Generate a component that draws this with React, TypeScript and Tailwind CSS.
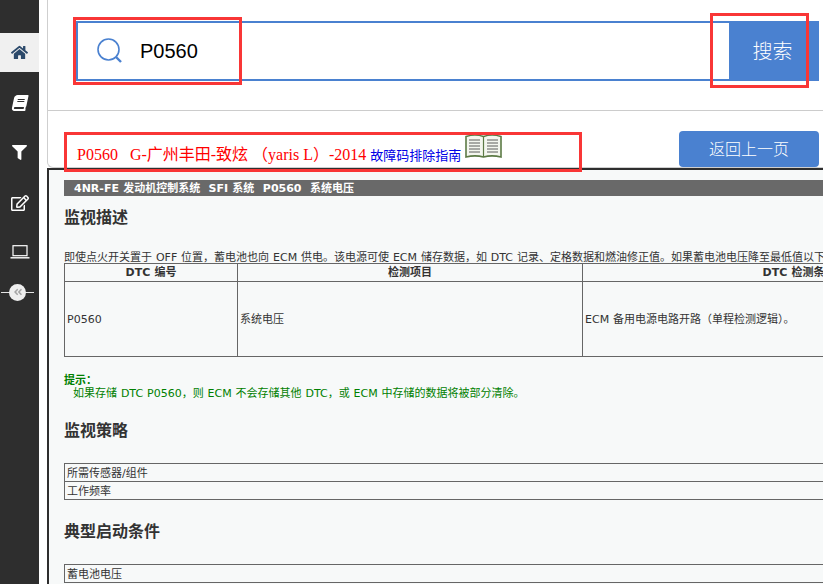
import { FaHome, FaBook, FaFilter, FaRegEdit, FaAngleDoubleLeft } from "react-icons/fa";

const cjk = "font-['DejaVu_Sans','Noto_Sans_CJK_SC',sans-serif]";

function Overlay({ className }: { className: string }) {
  return <div className={`absolute border-[3px] border-[#f93636] pointer-events-none ${className}`} />;
}

function NavItem({ children, active }: { children: React.ReactNode; active?: boolean }) {
  return (
    <div className={`h-[39px] flex items-center justify-center mb-[11px] ${active ? "bg-[#f0f0f0]" : ""}`}>
      {children}
    </div>
  );
}

export default function App() {
  return (
    <div className={`relative w-[823px] h-[584px] overflow-hidden bg-white flex ${cjk}`}>
      <aside className="w-[39px] shrink-0 bg-[#2e2e2e] pt-[33px]">
        <NavItem active>
          <FaHome size={17} color="#2c4a6b" />
        </NavItem>
        <NavItem>
          <FaBook size={16} color="#ffffff" className="-skew-x-12" />
        </NavItem>
        <NavItem>
          <FaFilter size={15} color="#ffffff" />
        </NavItem>
        <NavItem>
          <FaRegEdit size={18} color="#ffffff" />
        </NavItem>
        <NavItem>
          <svg className="-mt-[2px]" width="20" height="14" viewBox="0 0 20 14" fill="none">
            <rect x="3" y="0.700" width="14" height="10" stroke="white" strokeWidth="1.200" />
            <path d="M0.500 12.800h19" stroke="white" strokeWidth="1.400" />
          </svg>
        </NavItem>
        <div className="relative h-[16px] mt-[12px] flex items-center pl-[9px]">
          <div className="absolute left-[1px] w-[33px] h-px bg-[#e5e5e5]" />
          <div className="relative w-[17px] h-[17px] rounded-full bg-[#eeeeee] flex items-center justify-center">
            <FaAngleDoubleLeft size={10} color="#a5a5a5" />
          </div>
        </div>
      </aside>

      <main className="flex-1 min-w-0 pl-[8px] flex flex-col">
        <section className="h-[168px] shrink-0 border-l border-b border-[#cfcfcf] rounded-bl-[6px] flex flex-col">
          <div className="h-[111px] shrink-0 border-b border-[#cccccc] pt-[21px] pl-[28px] pr-[4px]">
            <div className="h-[60px] border-2 border-[#4a81d0] flex items-center">
              <svg className="ml-[19px]" width="26" height="26" viewBox="0 0 26 26" fill="none">
                <circle cx="11.500" cy="11.500" r="10.500" stroke="#4a81d0" strokeWidth="1.600" />
                <path d="M19 19l5 5" stroke="#4a81d0" strokeWidth="2.400" />
              </svg>
              <span className="ml-[17px] flex-1 text-[20px] text-black font-['Liberation_Sans',sans-serif]">P0560</span>
              <button className="w-[90px] self-stretch -my-[2px] -mr-[2px] bg-[#4a81d0] text-white text-[20px] font-['Noto_Sans_CJK_SC',sans-serif] font-light pr-[3px]">
                搜索
              </button>
            </div>
          </div>
          <div className="flex-1 flex items-start justify-between pl-[29px] pr-[4px]">
            <div className="mt-[23px] flex items-end font-['Liberation_Serif','Noto_Sans_CJK_SC',serif] whitespace-nowrap">
              <span className="text-[16px] leading-[20px] text-[#f00] whitespace-pre">P0560   G-广州丰田-致炫 （yaris L）-2014 </span>
              <span className="text-[13px] leading-[20px] text-[#0000e6] font-['Noto_Sans_CJK_SC',sans-serif]">故障码排除指南</span>
              <svg className="ml-[4px] mb-[6px]" width="37" height="25" viewBox="0 0 37 25" fill="none">
                <path d="M1 2.500c6-2 12-2 17.500 0c5.500-2 11.500-2 17.500 0V23c-6-1.500-12-1.500-17.500 0c-5.500-1.500-11.500-1.500-17.500 0z" fill="#f4f7ef" stroke="#5c7a45" strokeWidth="1.600" />
                <path d="M18.500 2.500V23" stroke="#5c7a45" strokeWidth="1.200" />
                <path d="M4 6h11M4 9h11M4 12h11M4 15h11M4 18h11M22 6h11M22 9h11M22 12h11M22 15h11M22 18h11" stroke="#4a4a4a" strokeWidth="0.900" />
              </svg>
            </div>
            <button className="mt-[20px] w-[140px] h-[36px] pb-[2px] rounded-[4px] bg-[#4a81d0] text-white text-[16px] font-['Noto_Sans_CJK_SC',sans-serif] font-light">
              返回上一页
            </button>
          </div>
        </section>

        <article className="flex-1 min-h-0 border-l-2 border-t-2 border-[#2e2e2e] bg-[#f7f9f9] pl-[15px] pt-[10px] text-[11px] text-[#333333] overflow-hidden w-[776px] [word-spacing:0.4px]">
          <div className="w-[800px]">
            <div className="h-[16px] bg-[#696969] text-white font-bold text-[11px] leading-[17px] pl-[10px] whitespace-pre">
              4NR-FE 发动机控制系统  SFI 系统  P0560  系统电压
            </div>
            <h2 className="mt-[11px] text-[16px] leading-[22px] font-bold text-[#333333]">监视描述</h2>
            <p className="mt-[22px] leading-[14px] whitespace-nowrap h-[12px]">
              即使点火开关置于 OFF 位置，蓄电池也向 ECM 供电。该电源可使 ECM 储存数据，如 DTC 记录、定格数据和燃油修正值。如果蓄电池电压降至最低值以下
            </p>
            <div className="border border-[#666666] w-[800px] grid grid-cols-[173px_345px_1fr]">
              <div className="h-[18px] font-bold text-center leading-[18px] border-r border-b border-[#666666]">DTC 编号</div>
              <div className="h-[18px] font-bold text-center leading-[18px] border-r border-b border-[#666666]">检测项目</div>
              <div className="h-[18px] font-bold text-center leading-[18px] border-b border-[#666666] pl-[152px] whitespace-nowrap">DTC 检测条件</div>
              <div className="h-[74px] flex items-center pl-[2px] pt-[2px] border-r border-[#666666]">P0560</div>
              <div className="h-[74px] flex items-center pl-[2px] pt-[2px] border-r border-[#666666]">系统电压</div>
              <div className="h-[74px] flex items-center pl-[2px] pt-[2px]">ECM 备用电源电路开路（单程检测逻辑）。</div>
            </div>
            <div className="mt-[17px] text-[#008000] leading-[13px]">
              <div className="font-bold">提示：</div>
              <div className="pl-[9px]">如果存储 DTC P0560，则 ECM 不会存储其他 DTC，或 ECM 中存储的数据将被部分清除。</div>
            </div>
            <h2 className="mt-[20px] text-[16px] leading-[22px] font-bold">监视策略</h2>
            <div className="mt-[21px] border border-[#666666]">
              <div className="h-[18px] leading-[20px] pl-[2px] border-b border-[#666666]">所需传感器/组件</div>
              <div className="h-[17px] leading-[19px] pl-[2px]">工作频率</div>
            </div>
            <h2 className="mt-[21px] text-[16px] leading-[22px] font-bold">典型启动条件</h2>
            <div className="mt-[21px] border border-[#666666]">
              <div className="h-[17px] leading-[19px] pl-[2px]">蓄电池电压</div>
            </div>
          </div>
        </article>
      </main>

      <Overlay className="left-[73px] top-[17px] w-[169px] h-[68px]" />
      <Overlay className="left-[710px] top-[13px] w-[99px] h-[75px]" />
      <Overlay className="left-[64px] top-[132px] w-[518px] h-[40px]" />
    </div>
  );
}
